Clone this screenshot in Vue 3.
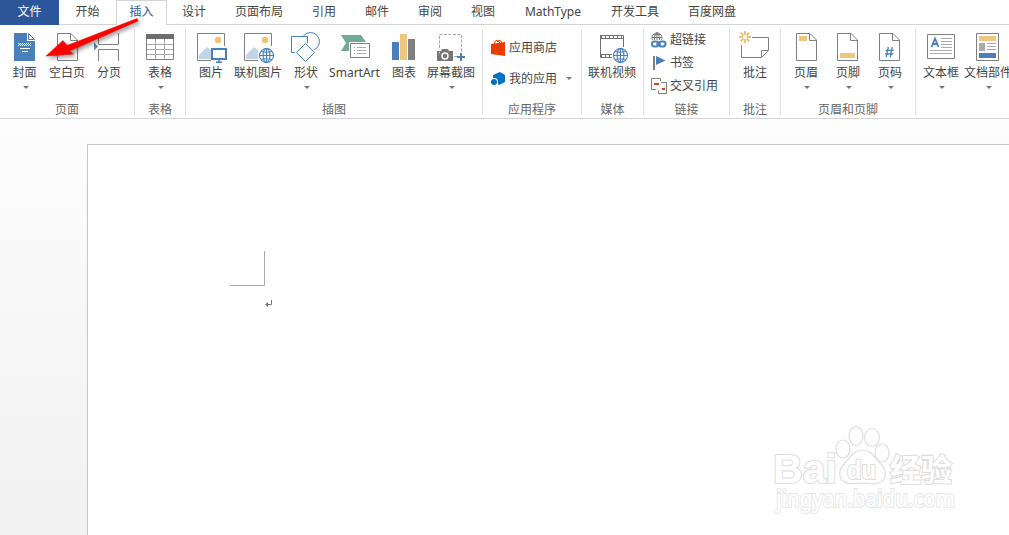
<script setup>
const tabs = [
  { t: '文件', w: 59, c: 'file' }, { t: '开始', w: 57 }, { t: '插入', w: 51, c: 'active' },
  { t: '设计', w: 54 }, { t: '页面布局', w: 76 }, { t: '引用', w: 54 }, { t: '邮件', w: 52 },
  { t: '审阅', w: 54 }, { t: '视图', w: 52 }, { t: 'MathType', w: 88 }, { t: '开发工具', w: 76 },
  { t: '百度网盘', w: 78 },
]
// x is the left edge of a button in ribbon coordinates; icons are drawn in the same space
const groups = [
  { name: '页面', w: 135, pad: 3, items: [
    { t: '封面', x: 3, w: 43, i: 'cover', d: 1 }, { t: '空白页', x: 46, w: 42, i: 'blank' }, { t: '分页', x: 88, w: 42, i: 'break' }] },
  { name: '表格', w: 51, pad: 4, items: [{ t: '表格', x: 139, w: 42, i: 'table', d: 1 }] },
  { name: '插图', w: 297, pad: 5, items: [
    { t: '图片', x: 191, w: 40, i: 'pic' }, { t: '联机图片', x: 231, w: 54, i: 'webpic' },
    { t: '形状', x: 285, w: 42, i: 'shapes', d: 1 }, { t: 'SmartArt', x: 327, w: 55, i: 'smart' },
    { t: '图表', x: 382, w: 44, i: 'chart' }, { t: '屏幕截图', x: 426, w: 50, i: 'shot', d: 1 }] },
  { name: '应用程序', w: 99, kind: 'apps', rows: [{ t: '应用商店', i: 'store' }, { t: '我的应用', i: 'myapp', d: 1 }] },
  { name: '媒体', w: 62, pad: 4, items: [{ t: '联机视频', x: 586, w: 52, i: 'video' }] },
  { name: '链接', w: 86, kind: 'links', rows: [{ t: '超链接', i: 'link' }, { t: '书签', i: 'flag' }, { t: '交叉引用', i: 'cross' }] },
  { name: '批注', w: 51, pad: 4, items: [{ t: '批注', x: 734, w: 42, i: 'note' }] },
  { name: '页眉和页脚', w: 135, pad: 4, items: [
    { t: '页眉', x: 785, w: 42, i: 'header', d: 1 }, { t: '页脚', x: 827, w: 42, i: 'footer', d: 1 }, { t: '页码', x: 869, w: 42, i: 'num', d: 1 }] },
  { name: '', w: 140, pad: 4, items: [
    { t: '文本框', x: 920, w: 42, i: 'textbox', d: 1 }, { t: '文档部件', x: 962, w: 52, i: 'parts', d: 1 }] },
]
</script>

<template>
  <div class="app">
    <nav class="tabs">
      <div v-for="t in tabs" :key="t.t" class="tab" :class="t.c" :style="{ width: t.w + 'px' }">{{ t.t }}</div>
    </nav>
    <section class="ribbon">
      <div v-for="(g, k) in groups" :key="k" class="group" :style="{ width: g.w + 'px' }">
        <div v-if="g.items" class="buttons" :style="{ paddingLeft: g.pad + 'px' }">
          <div v-for="b in g.items" :key="b.t" class="btn" :style="{ width: b.w + 'px' }">
            <svg class="icon" :width="b.w" height="34" :viewBox="`${b.x} 30 ${b.w} 34`" fill="none">
              <template v-if="b.i === 'cover'">
                <path d="M14 33H27V41H35V61H14Z" fill="#4a80ba" /><path d="M28.5 33.5V39.5H34.5Z" fill="#fff" stroke="#4a80ba" />
                <path d="M18 43.5H31M18 45.5H31" stroke="#fff" stroke-dasharray="1 1" /><path d="M19 44.5H31" stroke="#fff" stroke-dasharray="1 1" />
                <path d="M20 48.5H30M22 51.5H28" stroke="#fff" />
              </template>
              <template v-if="b.i === 'blank'">
                <path d="M57.5 33.5H71L77.5 40V60.5H57.5ZM70.5 33.5V40.5H77.5" stroke="#7f7f7f" fill="#fff" />
              </template>
              <template v-if="b.i === 'break'">
                <path d="M98.5 33V44.5H118.5V33M98.5 61V49.5H118.5V61" stroke="#7f7f7f" /><path d="M94 42.5L98 46.5L94 50.5Z" fill="#4a80ba" />
              </template>
              <template v-if="b.i === 'table'">
                <path d="M146 34H174V39H146Z" fill="#6e6e6e" /><path d="M155.5 39V59M164.5 39V59M146 44.5H174M146 49.5H174M146 54.5H174" stroke="#a6a6a6" /><path d="M146.5 39V59.5H173.5V39" stroke="#7f7f7f" />
              </template>
              <template v-if="b.i === 'pic' || b.i === 'webpic'">
                <g :transform="b.i === 'pic' ? '' : 'translate(47 0)'">
                  <path d="M211 60.5H197.5V33.5H224.5V46" stroke="#7f7f7f" /><circle cx="218" cy="40" r="3.2" fill="#edc377" />
                  <path d="M199 59V55L207 47L211 50V59Z" fill="#c3d4e8" />
                </g>
                <g v-if="b.i === 'pic'"><rect x="212" y="49" width="14" height="10" fill="#fff" stroke="#4a80ba" stroke-width="2" /><path d="M219 59V62M216 62.3H222" stroke="#4a80ba" stroke-width="1.5" /></g>
                <g v-else stroke="#4a80ba" stroke-width="1.1"><circle cx="266.5" cy="55.5" r="7" fill="#fff" /><ellipse cx="266.5" cy="55.5" rx="3.4" ry="7" /><path d="M259.5 55.5H273.5M266.5 48.5V62.5M261 51.5Q266.5 53 272 51.5M261 59.5Q266.5 58 272 59.5" /></g>
              </template>
              <template v-if="b.i === 'shapes'">
                <circle cx="310.5" cy="41.5" r="9" stroke="#4a80ba" fill="#fff" /><path d="M291.5 36.5H307.5V52.5H291.5Z" stroke="#4a80ba" fill="#fff" />
                <path d="M305.5 43L314.5 52L305.5 61L296.5 52Z" stroke="#fff" stroke-width="3" /><path d="M305.5 43.5L314.5 52.5L305.5 61.5L296.5 52.5Z" fill="#fff" stroke="#4a80ba" />
              </template>
              <template v-if="b.i === 'smart'">
                <path d="M341 35H361L366 42H349V51H341L346 43Z" fill="#74a898" /><path d="M350.5 43.5H369.5V57.5H350.5Z" fill="#fff" stroke="#7f7f7f" />
                <path d="M354 47.5H355M357 47.5H366M354 50.5H355M357 50.5H366M354 53.5H355M357 53.5H366" stroke="#aaa" />
              </template>
              <template v-if="b.i === 'chart'">
                <path d="M392 42H399V60H392Z" fill="#4a80ba" /><path d="M400 34H407V60H400Z" fill="#edc77f" /><path d="M408 39H415V60H408Z" fill="#808080" />
              </template>
              <template v-if="b.i === 'shot'">
                <path d="M439.5 48V34.5H461.5V54M454 56.5H458" stroke="#a6a6a6" stroke-dasharray="3 1.5" />
                <path d="M437 51H441L442 49H448L449 51H453V61H437Z" fill="#777" /><circle cx="445" cy="56" r="3" stroke="#fff" stroke-width="1.4" /><path d="M439 52.8H440" stroke="#fff" />
                <path d="M461 53V61M457 57H465" stroke="#4a80ba" stroke-width="2" />
              </template>
              <template v-if="b.i === 'video'">
                <path d="M600.5 35.500H623.500V47M600.500 35V57.500H612M600.500 38.500H623.500M600.500 54.500H612" stroke="#707070" /><path d="M601 37H624M601 56H612" stroke="#707070" stroke-width="3" stroke-dasharray="1 3" />
                <g stroke="#4a80ba" stroke-width="1.1"><circle cx="620.5" cy="55.5" r="7" fill="#fff" /><ellipse cx="620.5" cy="55.5" rx="3.4" ry="7" /><path d="M613.5 55.5H627.5M620.5 48.5V62.5M615 51.5Q620.5 53 626 51.5M615 59.5Q620.5 58 626 59.5" /></g>
              </template>
              <template v-if="b.i === 'note'">
                <path d="M752 37.5H768.5V50.5L761.5 57.5H741.5V45M761.5 57V50.5H768" stroke="#7f7f7f" />
                <path d="M745 31V35M745 39V43M739 37H743M747 37H751M740.700 32.700L743.500 35.500M749.300 32.700L746.500 35.500M740.700 41.300L743.500 38.500M749.300 41.300L746.500 38.500" stroke="#edc377" stroke-width="2" />
              </template>
              <template v-if="['header', 'footer', 'num'].includes(b.i)">
                <path :transform="`translate(${{ header: 0, footer: 41, num: 83 }[b.i]} 0)`" d="M796.5 33.5H810L816.5 40V60.5H796.5ZM809.5 33.5V40.5H816.5" stroke="#7f7f7f" />
                <path v-if="b.i === 'header'" d="M799 36H807V41H799Z" fill="#edc77f" />
                <path v-if="b.i === 'footer'" d="M840 53H855V58H840Z" fill="#edc77f" />
                <path v-if="b.i === 'num'" d="M888.3 47L886.3 57M892.3 47L890.3 57M885.5 50.3H893.8M885 54H893.3" stroke="#4a80ba" stroke-width="1.3" />
              </template>
              <template v-if="b.i === 'textbox'">
                <path d="M927.5 34.5H954.5V58.5H927.5Z" stroke="#7f7f7f" /><path d="M931.5 47L935 38.5L938.5 47M932.6 44H937.4" stroke="#4a80ba" stroke-width="1.8" />
                <path d="M941 38.5H952M941 41.5H952M941 44.5H952M941 47.5H952M930 50.5H952M930 53.5H952" stroke="#aaa" />
              </template>
              <template v-if="b.i === 'parts'">
                <path d="M976.5 33.5H998.5V60.5H976.5Z" stroke="#7f7f7f" /><path d="M979 36H996V41H979Z" fill="#edc77f" /><path d="M979 43H985V51H979Z" fill="#aaa" />
                <path d="M987 43.5H996M987 46.5H996M987 49.5H996" stroke="#aaa" /><path d="M979 53H996V58H979Z" fill="#4a80ba" />
              </template>
            </svg>
            <span class="label">{{ b.t }}</span>
            <i v-if="b.d" class="caret"></i>
          </div>
        </div>
        <div v-else class="rows" :class="g.kind">
          <div v-for="r in g.rows" :key="r.t" class="row">
            <svg width="18" height="18" viewBox="0 0 18 18" fill="none">
              <template v-if="r.i === 'store'"><path d="M1 5L15 3V17L1 15Z" fill="#eb3c00" /><path d="M4.5 6V4Q5 1.5 7 1.5Q9 1.5 10 4.5M7 3Q9 .5 11 2L11.5 4" stroke="#eb3c00" /></template>
              <template v-if="r.i === 'myapp'"><path d="M3 5L10 2L15 5V12L9 15L3 8Z" fill="#0072c6" /><circle cx="4" cy="12" r="4" fill="#fff" /><circle cx="4" cy="12" r="3" fill="#0072c6" /></template>
              <template v-if="r.i === 'link'"><path d="M2.5 9A5 5 0 1 1 11.5 9M2 6.5H12M7 1.5V9M4.5 9Q3.5 5 7 1.5Q10.5 5 9.5 9M3 3.5H11" stroke="#777" /><rect x="2" y="10.5" width="6.5" height="5" rx="2.4" stroke="#4a80ba" stroke-width="2" /><rect x="9" y="10.5" width="6.5" height="5" rx="2.4" stroke="#4a80ba" stroke-width="2" /><path d="M6 13H11" stroke="#4a80ba" stroke-width="1.5" /></template>
              <template v-if="r.i === 'flag'"><path d="M4 2V16" stroke="#7f7f7f" stroke-width="2" /><path d="M6 2L15.500 6.500L6 11Z" fill="#4a80ba" /></template>
              <template v-if="r.i === 'cross'"><path d="M6 12.500H1.500V1.500H10.500V4M11 5.500H16.500V16.500H8.500V13.500" stroke="#7f7f7f" /><path d="M4 7H9M12 12H15" stroke="#d24726" stroke-width="2" /></template>
            </svg>
            <span>{{ r.t }}</span>
            <i v-if="r.d" class="caret"></i>
          </div>
        </div>
        <div class="gname">{{ g.name }}</div>
      </div>
    </section>
    <main class="canvas">
      <div class="paper">
        <div class="corner"></div>
        <svg class="mark" width="8" height="8" viewBox="0 0 8 8"><path d="M6.500 0V4.500H2" fill="none" stroke="#777" /><path d="M0 4.500L3 2V7Z" fill="#777" /></svg>
      </div>
      <svg class="watermark" width="200" height="100" viewBox="765 420 200 100">
        <g fill="#fff" stroke="#dedede" stroke-width="1.2">
          <ellipse cx="843" cy="449" rx="7" ry="9" /><ellipse cx="856" cy="436" rx="7" ry="9.500" /><ellipse cx="872" cy="437.500" rx="7.500" ry="9" /><ellipse cx="882" cy="453" rx="7" ry="9" />
          <path d="M862 450C853 450 850 458 845 463C839 469 839 475 841 479C846 486 855 483 862 483C869 483 879 486 884 479C887 474 885 468 880 463C874 457 871 450 862 450Z" />
          <text class="wm bold" x="773" y="483" font-size="41" textLength="64" lengthAdjust="spacingAndGlyphs">Bai</text>
          <text class="wm bold" x="847" y="479" font-size="25" textLength="29" lengthAdjust="spacingAndGlyphs">du</text>
          <text class="wm cjk" x="890" y="481" font-size="31">经验</text>
          <text class="wm url" x="776" y="507" font-size="23" textLength="179" lengthAdjust="spacingAndGlyphs">jingyan.baidu.com</text>
        </g>
      </svg>
    </main>
    <svg class="pointer" width="110" height="65" viewBox="40 10 110 65">
      <path d="M46 56L63 40.500L67 45.500L137 18.500L138 21L69.500 51L73.500 54Z" fill="#f00" stroke="#e80000" stroke-width=".5" />
    </svg>
  </div>
</template>

<style>
body { margin: 0; overflow: hidden; }
</style>
<style scoped>
.app { position: relative; width: 1009px; height: 535px; overflow: hidden; display: flex; flex-direction: column; background: #fff; font: 12px/16px "Noto Sans", "Noto Sans CJK SC", sans-serif; color: #444; white-space: nowrap; }
.tabs { display: flex; height: 25px; flex: none; box-sizing: border-box; background: linear-gradient(#d4d4d4, #d4d4d4) 0 24px / 100% 1px no-repeat; }
.tab { flex: none; box-sizing: border-box; height: 25px; line-height: 24px; text-align: center; }
.file { background: #2b579a; color: #fff; }
.active { background: #fff; border: 1px solid #d4d4d4; border-bottom: 0; color: #2b579a; line-height: 22px; }
.ribbon { display: flex; flex: none; height: 94px; box-sizing: border-box; border-bottom: 1px solid #d4d4d4; padding-top: 4px; }
.group { flex: none; box-sizing: border-box; height: 86px; border-right: 1px solid #e1e1e1; display: flex; flex-direction: column; }
.buttons { display: flex; height: 73px; flex: none; padding-top: 1px; box-sizing: border-box; }
.btn { flex: none; display: flex; flex-direction: column; align-items: center; }
.icon { display: block; flex: none; }
.label { line-height: 16px; margin-top: 1px; }
.caret { width: 0; height: 0; border: 3px solid transparent; border-top-color: #777; border-bottom: 0; flex: none; }
.btn .caret { margin: 5px 0 0 2px; }
.gname { line-height: 16px; text-align: center; color: #666; }
.rows { height: 73px; flex: none; box-sizing: border-box; display: flex; flex-direction: column; }
.row { display: flex; align-items: center; height: 23px; }
.apps { padding: 3px 0 0 7px; }
.apps .row { height: 31px; }
.apps .row span { margin-left: 1px; }
.apps .caret { margin-left: 9px; }
.links { padding-left: 6px; }
.links .row { margin-top: -1px; height: 24px; }
.links .row span { margin-left: 2px; }
.canvas { position: relative; flex: 1; box-sizing: border-box; padding: 25px 0 0 87px; overflow: hidden; background: linear-gradient(#fdfdfd, #f1f1f1); }
.paper { box-sizing: border-box; width: 940px; height: 400px; border: 1px solid #c6c6c6; background: #fff; padding: 106px 0 0 142px; }
.corner { width: 34px; height: 34px; border: solid #ababab; border-width: 0 1px 1px 0; }
.mark { display: block; margin: 14px 0 0 35px; }
.watermark { position: absolute; left: 765px; top: 301px; }
.wm { paint-order: stroke; stroke-width: 2.200px; }
.bold { font-family: "Liberation Sans", sans-serif; font-weight: 700; }
.cjk { font-family: "Noto Sans CJK SC", sans-serif; font-weight: 700; }
.url { font-family: "Noto Sans", sans-serif; font-weight: 500; stroke: #e6e6e6; stroke-width: 2px; }
.pointer { position: absolute; left: 40px; top: 10px; filter: drop-shadow(2px 2px 2px rgba(0, 0, 0, .45)); }
</style>
